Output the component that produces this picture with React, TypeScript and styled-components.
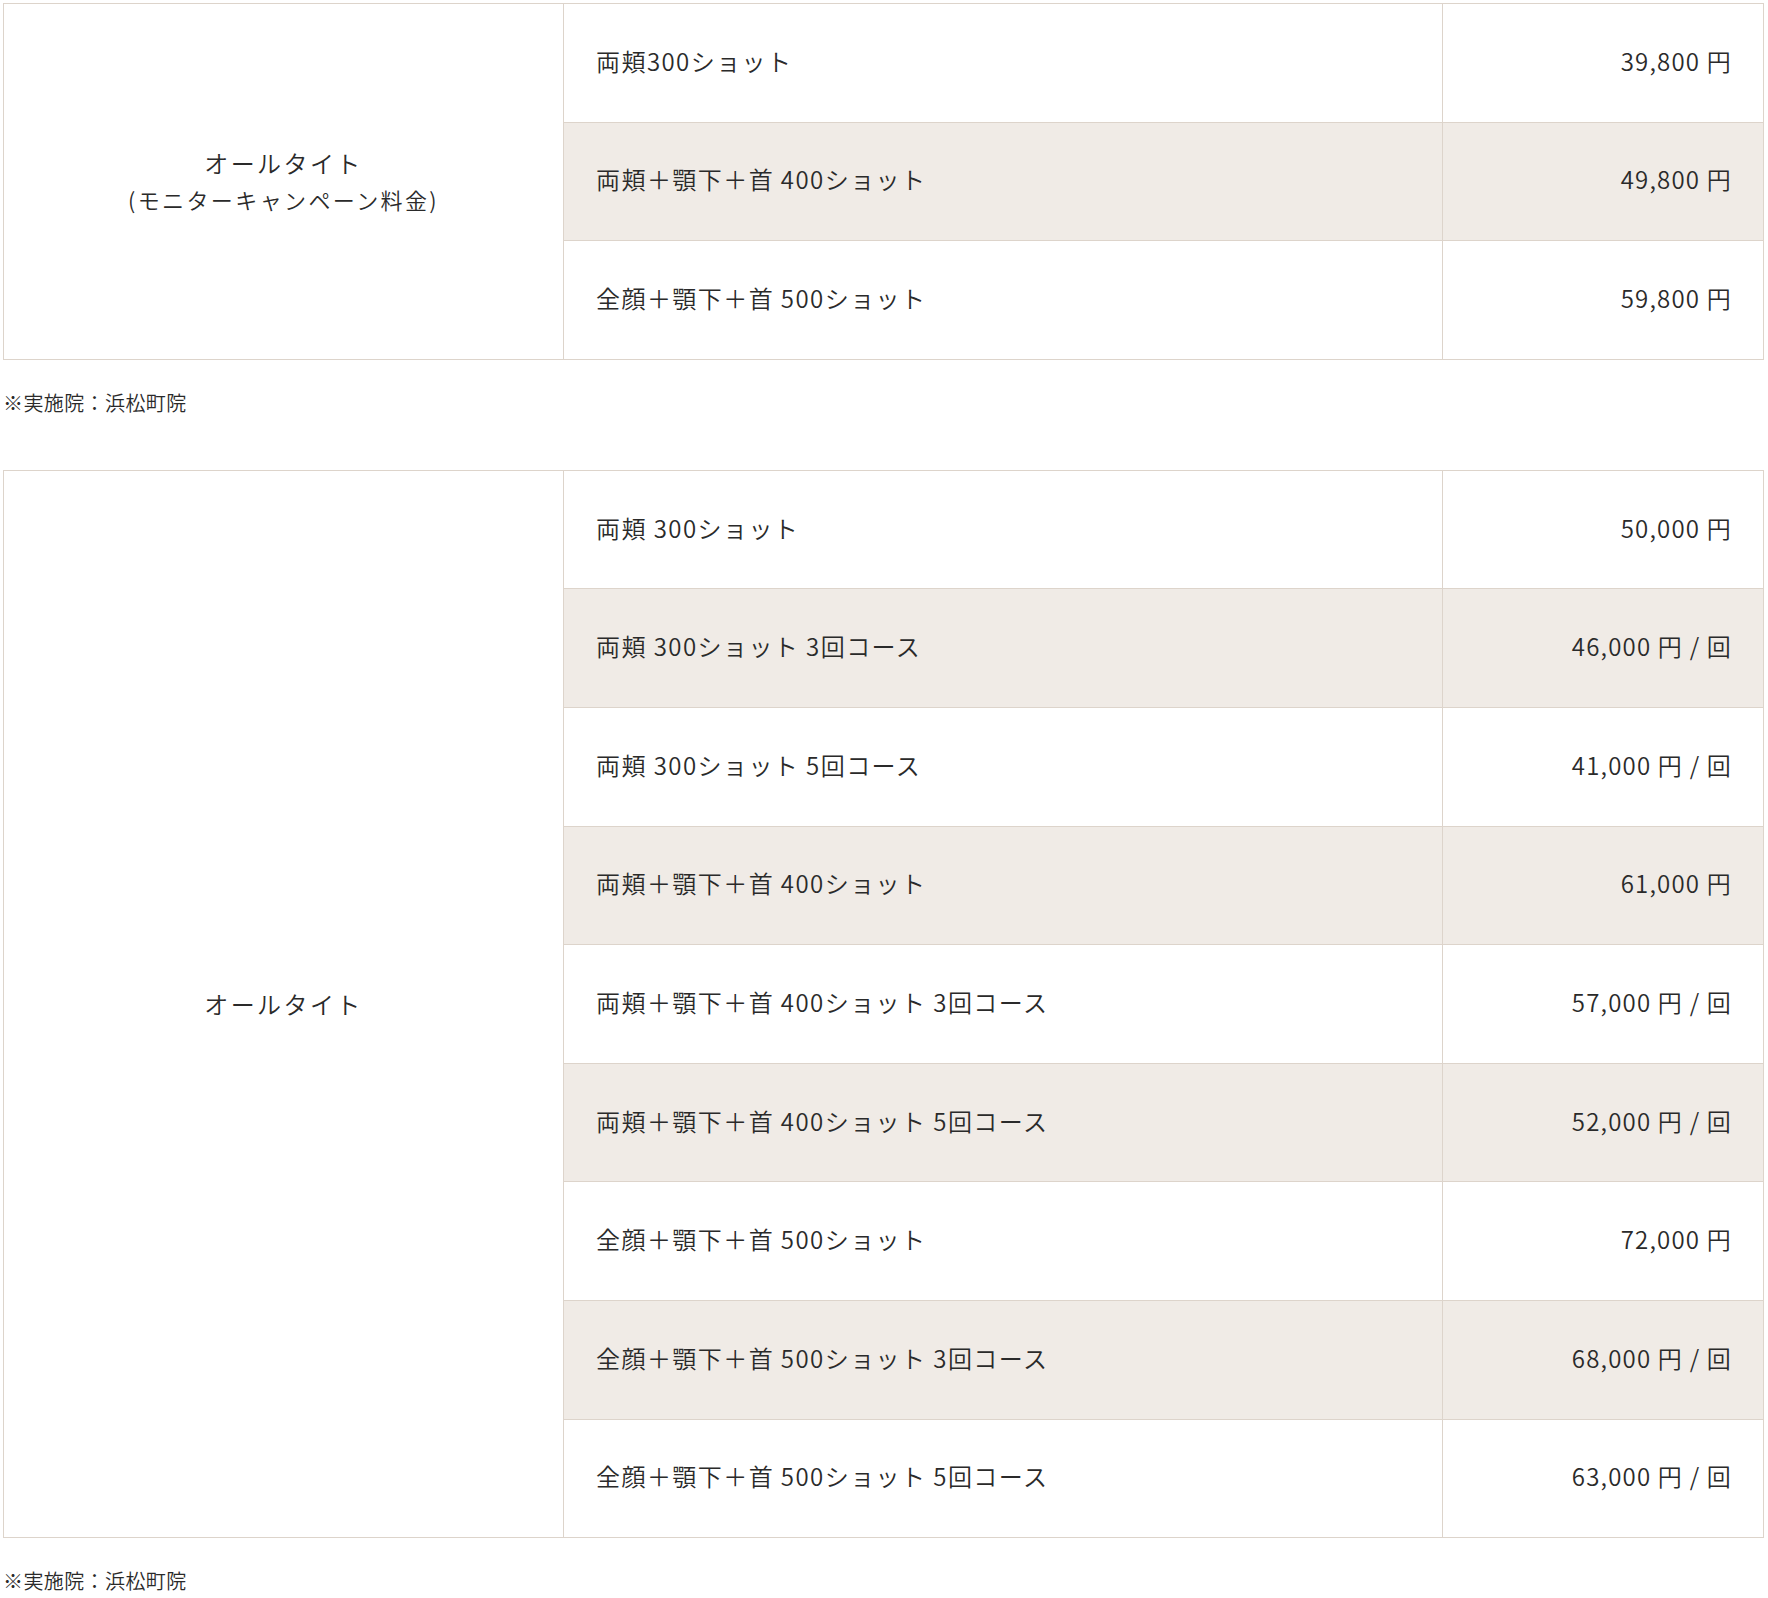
import React from "react";
import styled, { createGlobalStyle } from "styled-components";

const GlobalStyle = createGlobalStyle`
  html, body {
    margin: 0;
    padding: 0;
    background: #ffffff;
  }
  body {
    font-family: "Noto Sans CJK JP", "Noto Sans", sans-serif;
    font-weight: 350;
    color: #2a2a2a;
  }
`;

/* ================= LAYOUT ================= */
const Page = styled.div`
  width: 1760px;
  padding: 3px 0 0 3px;
`;

const Block = styled.section`
  & + & {
    margin-top: 54px;
  }
`;

/* ================= TABLE ================= */
const PriceTable = styled.table`
  width: 1760px;
  border-collapse: collapse;
  table-layout: fixed;
`;

const Cell = styled.td<{ $shade?: boolean }>`
  border: 1px solid #ddd4cb;
  background: ${(p) => (p.$shade ? "#f0ebe6" : "#ffffff")};
  height: 118.6px;
  box-sizing: border-box;
  padding: 0 32px 4px;
  font-size: 24px;
  line-height: 38px;
  letter-spacing: 0.06em;
  vertical-align: middle;
`;

const PlanCell = styled(Cell)`
  text-align: center;
  padding: 0;
  line-height: 36px;
  letter-spacing: 0.1em;
`;

const PlanSub = styled.span`
  font-size: 22px;
`;

const MenuCell = styled(Cell)`
  text-align: left;
`;

const PriceCell = styled(Cell)`
  text-align: right;
  padding-right: 31px;
  letter-spacing: 0.05em;
`;

const Note = styled.p`
  margin: 30px 0 0;
  font-size: 20px;
  line-height: 26px;
  letter-spacing: 0.02em;
`;

/* ================= DATA ================= */
type Row = { menu: string; price: string; per?: boolean };

const campaign: Row[] = [
  { menu: "両頬300ショット", price: "39,800" },
  { menu: "両頬＋顎下＋首 400ショット", price: "49,800" },
  { menu: "全顔＋顎下＋首 500ショット", price: "59,800" },
];

const regular: Row[] = [
  { menu: "両頬 300ショット", price: "50,000" },
  { menu: "両頬 300ショット 3回コース", price: "46,000", per: true },
  { menu: "両頬 300ショット 5回コース", price: "41,000", per: true },
  { menu: "両頬＋顎下＋首 400ショット", price: "61,000" },
  { menu: "両頬＋顎下＋首 400ショット 3回コース", price: "57,000", per: true },
  { menu: "両頬＋顎下＋首 400ショット 5回コース", price: "52,000", per: true },
  { menu: "全顔＋顎下＋首 500ショット", price: "72,000" },
  { menu: "全顔＋顎下＋首 500ショット 3回コース", price: "68,000", per: true },
  { menu: "全顔＋顎下＋首 500ショット 5回コース", price: "63,000", per: true },
];

function PlanTable({ plan, rows }: { plan: React.ReactNode; rows: Row[] }) {
  return (
    <PriceTable>
      <colgroup>
        <col style={{ width: 560 }} />
        <col style={{ width: 879 }} />
        <col style={{ width: 321 }} />
      </colgroup>
      <tbody>
        {rows.map((r, idx) => (
          <tr key={r.menu}>
            {idx === 0 && <PlanCell rowSpan={rows.length}>{plan}</PlanCell>}
            <MenuCell $shade={idx % 2 === 1}>{r.menu}</MenuCell>
            <PriceCell $shade={idx % 2 === 1}>
              {r.price} 円{r.per && " / 回"}
            </PriceCell>
          </tr>
        ))}
      </tbody>
    </PriceTable>
  );
}

export default function App() {
  return (
    <>
      <GlobalStyle />
      <Page>
        <Block>
          <PlanTable
            plan={
              <>
                オールタイト
                <br />
                <PlanSub>(モニターキャンペーン料金)</PlanSub>
              </>
            }
            rows={campaign}
          />
          <Note>※実施院：浜松町院</Note>
        </Block>
        <Block>
          <PlanTable plan="オールタイト" rows={regular} />
          <Note>※実施院：浜松町院</Note>
        </Block>
      </Page>
    </>
  );
}
